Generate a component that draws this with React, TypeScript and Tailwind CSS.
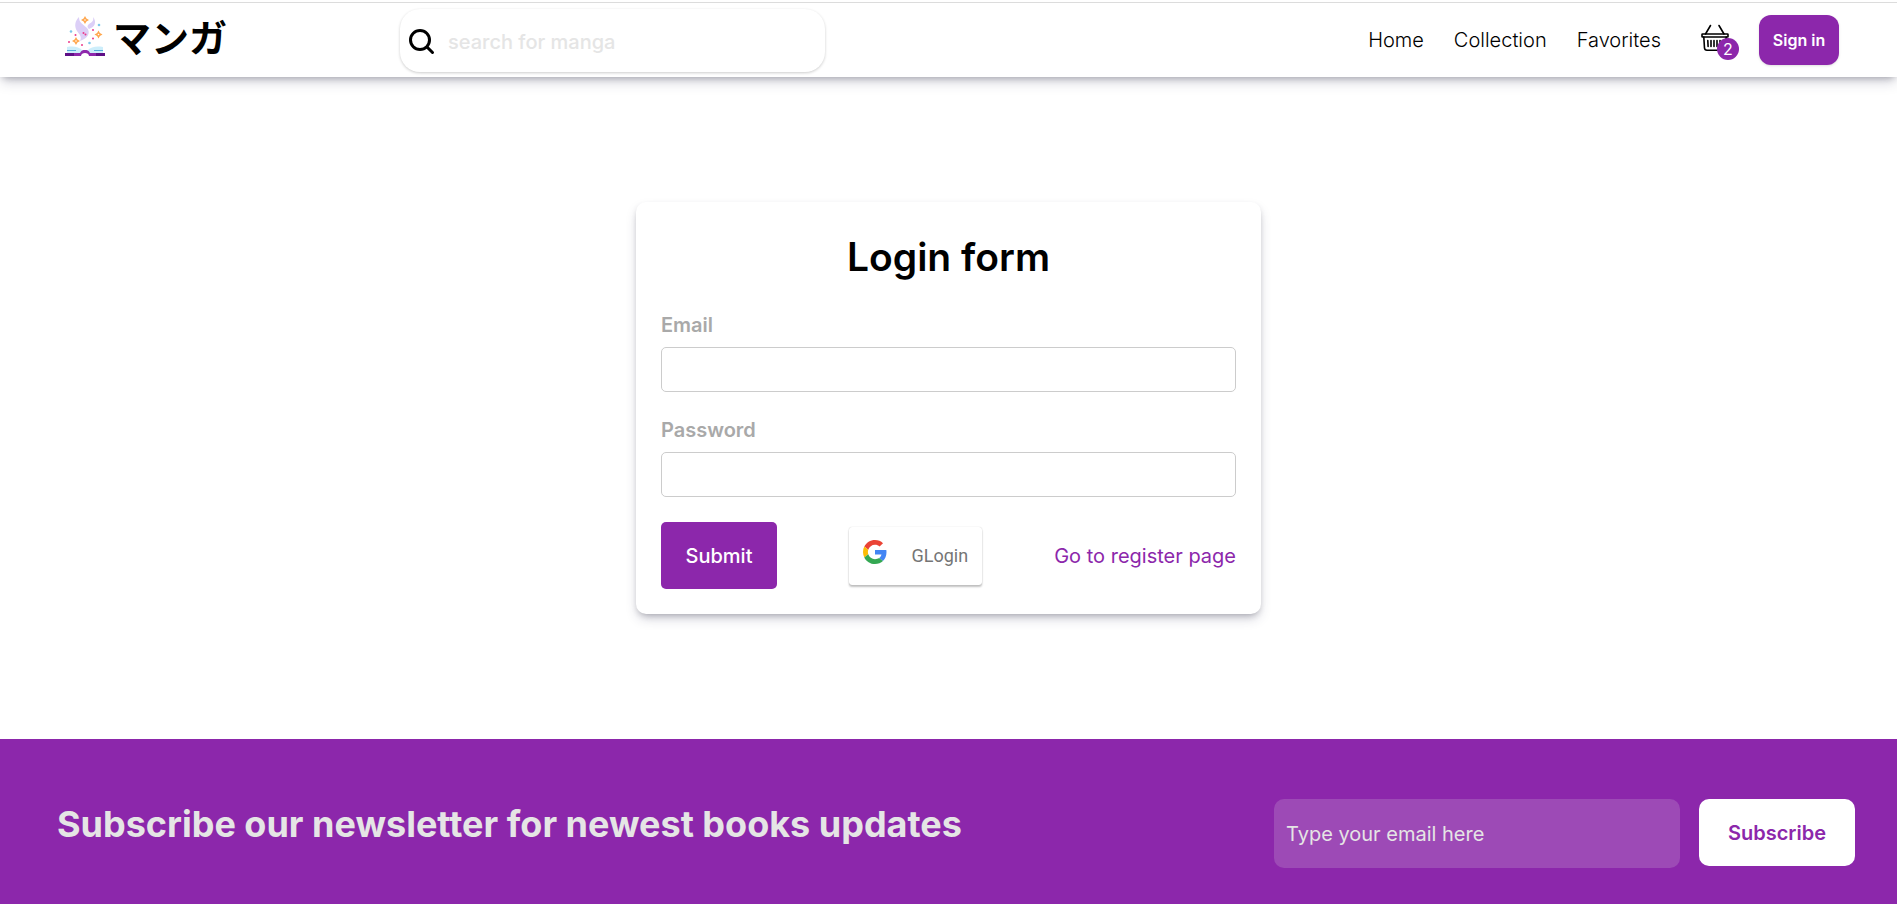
const links = ['Home', 'Collection', 'Favorites'];

function Logo() {
  return (
    <svg className="h-10 w-10" viewBox="0 0 40 40" aria-hidden="true">
      <path
        d="M14 1C10 5 9 10 12 15c3 4 5 6 3 10 8-3 11-8 7-13-4-4-8-5-8-11z"
        fill="#dccff7"
      />
      <path d="M28 1c1 4-1 5-4 7-2 2-2 3 0 5 6-2 8-7 4-12z" fill="#dccff7" />
      <g fill="#ffa64d">
        <path d="M20 0l1.400 2.600L24 4l-2.600 1.400L20 8l-1.400-2.600L16 4l2.600-1.400z" />
        <path d="M33.500 14.500l1.400 2.600 2.600 1.400-2.600 1.400-1.400 2.600-1.400-2.600-2.600-1.400 2.600-1.400z" />
        <path d="M11 21l1.400 2.600L15 25l-2.600 1.400L11 29l-1.400-2.600L7 25l2.600-1.400z" />
      </g>
      <g fill="#fff">
        <circle cx="20" cy="4" r="0.8" />
        <circle cx="33.500" cy="18.500" r="0.8" />
        <circle cx="11" cy="25" r="0.8" />
      </g>
      <g fill="#7ec8ea">
        <circle cx="34" cy="9" r="1.300" />
        <circle cx="6" cy="15.500" r="1.300" />
        <circle cx="24.500" cy="27" r="1.300" />
      </g>
      <g fill="#ec3a8b">
        <circle cx="28" cy="14" r="1" />
        <circle cx="18.500" cy="17" r="1" />
        <circle cx="20.500" cy="18.500" r="1" />
        <circle cx="10.500" cy="19" r="1" />
        <circle cx="28" cy="22.500" r="1" />
        <circle cx="4" cy="26" r="1" />
        <circle cx="17" cy="29" r="1" />
      </g>
      <path
        d="M2 31c6-1 12-.5 16 4l-1 2H2zM38 31c-6-1-12-.5-16 4l1 2h15z"
        fill="#cdeefb"
      />
      <path d="M2 34.500h9M29 34.500h9" stroke="#55acd8" strokeWidth="1" />
      <path
        d="M0 37h15c1-2.500 3-3 5-3s4 .5 5 3h15v3H24c0-2-2-3-4-3s-4 1-4 3H0z"
        fill="#8e27ab"
      />
      <path d="M0 37h9v3H0zM31 37h9v3h-9z" fill="#5f0f86" />
    </svg>
  );
}

function SearchIcon() {
  return (
    <svg
      className="h-7 w-7 shrink-0"
      viewBox="0 0 28 28"
      fill="none"
      stroke="black"
      strokeWidth="3"
      strokeLinecap="round"
      aria-hidden="true"
    >
      <circle cx="12" cy="12" r="9.500" />
      <path d="M19 19l5.500 5.500" />
    </svg>
  );
}

function BasketIcon() {
  return (
    <svg
      className="h-7 w-7"
      viewBox="0 0 28 28"
      fill="none"
      stroke="black"
      strokeWidth="1.600"
      strokeLinecap="round"
      strokeLinejoin="round"
      aria-hidden="true"
    >
      <path d="M9.500 1.500L4.500 10M18 1.500l5 8.500" />
      <rect x="1" y="10" width="26" height="3" rx="0.500" />
      <path d="M2.800 13l.7 11c.1 1.500 1 2.200 2.500 2.200h16c1.500 0 2.400-.7 2.500-2.200l.7-11" />
      <path d="M6.800 16.500l.3 6M10 16.500v6M13 16.500v6M16 16.500v6M19 16.500v6M22 16.500l-.3 6" />
    </svg>
  );
}

function GoogleIcon() {
  return (
    <svg className="h-6 w-6" viewBox="0 0 48 48" aria-hidden="true">
      <path
        fill="#EA4335"
        d="M24 9.500c3.540 0 6.710 1.220 9.210 3.600l6.850-6.850C35.900 2.380 30.470 0 24 0 14.620 0 6.510 5.380 2.560 13.220l7.980 6.190C12.430 13.720 17.740 9.500 24 9.500z"
      />
      <path
        fill="#4285F4"
        d="M46.980 24.550c0-1.570-.15-3.090-.38-4.550H24v9.020h12.940c-.58 2.960-2.260 5.480-4.780 7.180l7.730 6c4.510-4.180 7.090-10.360 7.090-17.650z"
      />
      <path
        fill="#FBBC05"
        d="M10.530 28.590c-.48-1.450-.76-2.990-.76-4.590s.27-3.140.76-4.590l-7.980-6.190C.92 16.460 0 20.120 0 24c0 3.880.92 7.540 2.560 10.780l7.970-6.190z"
      />
      <path
        fill="#34A853"
        d="M24 48c6.480 0 11.930-2.130 15.890-5.810l-7.730-6c-2.150 1.450-4.920 2.300-8.160 2.300-6.260 0-11.570-4.220-13.470-9.910l-7.980 6.190C6.510 42.620 14.620 48 24 48z"
      />
    </svg>
  );
}

function Header() {
  return (
    <header className="border-t-2 border-white shadow-[0_6px_12px_-2px_rgba(50,50,93,0.25),0_3px_7px_-3px_rgba(0,0,0,0.3)]">
      <div className="flex h-[75px] items-center border-t border-[#dcdcdc] pr-[58px] pl-[65px]">
        <a
          className="flex items-center gap-2 pb-2 font-['Noto_Sans_CJK_JP',sans-serif] text-[38px] leading-10 font-bold"
          href="#home"
        >
          <Logo />
          マンガ
        </a>
        <label className="ml-[173px] flex h-[63px] w-[425px] items-center gap-3 rounded-[20px] px-2 pt-1 shadow-[0_1px_3px_rgba(0,0,0,0.2)]">
          <SearchIcon />
          <input
            className="w-full text-xl font-medium outline-none placeholder:text-[#e5e5e5]"
            type="text"
            aria-label="Search"
            placeholder="search for manga"
          />
        </label>
        <nav className="ml-auto flex items-center gap-[30px] text-xl font-light">
          {links.map((link) => (
            <a key={link} href={`#${link.toLowerCase()}`}>
              {link}
            </a>
          ))}
        </nav>
        <a className="relative ml-10 pb-1" href="#basket" aria-label="Basket">
          <BasketIcon />
          <span className="absolute top-[14px] left-4 flex h-[22px] w-[22px] items-center justify-center rounded-full bg-[#8c27ab] text-base text-white">
            2
          </span>
        </a>
        <button
          className="ml-[30px] h-[50px] w-20 rounded-xl bg-[#8c27ab] text-base font-semibold text-white shadow-sm"
          type="button"
        >
          Sign in
        </button>
      </div>
    </header>
  );
}

function LoginForm() {
  return (
    <form className="w-[625px] rounded-[10px] p-[25px] shadow-[0_6px_12px_-2px_rgba(50,50,93,0.25),0_3px_7px_-3px_rgba(0,0,0,0.3)]">
      <h1 className="mb-[25px] text-center text-[39px] leading-[60px] font-semibold">
        Login form
      </h1>
      <label
        className="mb-2 block text-xl leading-[27px] font-semibold text-[#a9a9a9]"
        htmlFor="email"
      >
        Email
      </label>
      <input
        className="mb-[25px] block h-[45px] w-full rounded-[5px] border border-[#ccc] px-3"
        id="email"
        type="email"
      />
      <label
        className="mb-2 block text-xl leading-[27px] font-semibold text-[#a9a9a9]"
        htmlFor="password"
      >
        Password
      </label>
      <input
        className="mb-[25px] block h-[45px] w-full rounded-[5px] border border-[#ccc] px-3"
        id="password"
        type="password"
      />
      <div className="flex items-center justify-between">
        <button
          className="h-[67px] w-[116px] rounded-[5px] bg-[#8c27ab] text-xl font-medium text-white"
          type="submit"
        >
          Submit
        </button>
        <button
          className="flex h-[58px] w-[133px] items-center justify-between rounded-[3px] px-3.5 font-['Roboto',sans-serif] text-lg text-[#757575] shadow-[0_2px_2px_rgba(0,0,0,0.24),0_0_1px_rgba(0,0,0,0.24)]"
          type="button"
        >
          <span className="pb-2">
            <GoogleIcon />
          </span>
          GLogin
        </button>
        <a className="text-xl text-[#8c27ab]" href="#register">
          Go to register page
        </a>
      </div>
    </form>
  );
}

function Newsletter() {
  return (
    <footer className="flex items-start bg-[#8c27ab] pt-[60px] pr-[42px] pb-9 pl-[57px]">
      <h2 className="text-4xl leading-[50px] font-bold text-[#e5e5e5]">
        Subscribe our newsletter for newest books updates
      </h2>
      <input
        className="ml-auto h-[69px] w-[406px] rounded-[10px] bg-[#9d4ab6] px-3 text-xl text-white outline-none placeholder:text-[#e5e5e5]"
        type="email"
        aria-label="Newsletter email"
        placeholder="Type your email here"
      />
      <button
        className="ml-[19px] h-[67px] w-[156px] rounded-[10px] bg-white text-xl font-semibold text-[#8c27ab]"
        type="button"
      >
        Subscribe
      </button>
    </footer>
  );
}

function App() {
  return (
    <div className="flex min-h-screen flex-col bg-white font-['Inter',sans-serif] text-black">
      <Header />
      <main className="flex flex-1 items-center justify-center">
        <LoginForm />
      </main>
      <Newsletter />
    </div>
  );
}

export default App;
